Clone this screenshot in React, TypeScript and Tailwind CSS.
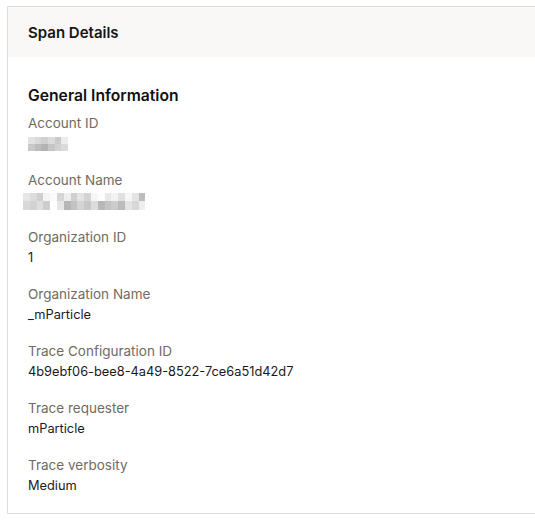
const fields: { label: string; value?: string; redacted?: "id" | "name" }[] = [
  { label: "Account ID", redacted: "id" },
  { label: "Account Name", redacted: "name" },
  { label: "Organization ID", value: "1" },
  { label: "Organization Name", value: "_mParticle" },
  { label: "Trace Configuration ID", value: "4b9ebf06-bee8-4a49-8522-7ce6a51d42d7" },
  { label: "Trace requester", value: "mParticle" },
  { label: "Trace verbosity", value: "Medium" },
];

// pixelated blur blocks standing in for redacted values
const idCells = [
  ["bg-[#e2e2e2]", "bg-[#dadada]", "bg-[#d0d0d0]", "bg-[#dcdcdc]", "bg-[#cacaca]", "bg-[#ececec]"],
  ["bg-[#c9c9c9]", "bg-[#bdbdbd]", "bg-[#b2b2b2]", "bg-[#c6c6c6]", "bg-[#d2d2d2]", "bg-[#dadada]"],
];

const nameCells = [
  [
    "bg-[#e6e6e6]", "bg-[#dcdcdc]", "bg-[#cfcfcf]", "bg-[#f4f4f4]", "bg-[#fbfbfb]", "bg-[#d6d6d6]",
    "bg-[#eeeeee]", "bg-[#cfcfcf]", "bg-[#e4e4e4]", "bg-[#d4d4d4]", "bg-[#f6f6f6]", "bg-[#fdfdfd]",
    "bg-[#e8e8e8]", "bg-[#f2f2f2]", "bg-[#e0e0e0]", "bg-[#f6f6f6]", "bg-[#e4e4e4]", "bg-[#bdbdbd]",
  ],
  [
    "bg-[#d8d8d8]", "bg-[#d2d2d2]", "bg-[#dedede]", "bg-[#cdcdcd]", "bg-[#ffffff]", "bg-[#e6e6e6]",
    "bg-[#b6b6b6]", "bg-[#c2c2c2]", "bg-[#d4d4d4]", "bg-[#c8c8c8]", "bg-[#dcdcdc]", "bg-[#b8b8b8]",
    "bg-[#c4c4c4]", "bg-[#cccccc]", "bg-[#bcbcbc]", "bg-[#e4e4e4]", "bg-[#d8d8d8]", "bg-[#eeeeee]",
  ],
];

function Blur({ kind }: { kind: "id" | "name" }) {
  const rows = kind === "id" ? idCells : nameCells;
  return (
    <div className={kind === "id" ? "flex h-[22px] flex-col justify-center" : "-ml-[5px] flex h-[22px] flex-col justify-center"}>
      {rows.map((row, i) => (
        <div key={i} className="flex">
          {row.map((c, j) => (
            <div
              key={j}
              className={`${c} ${kind === "id" ? "h-[7px] w-[6.7px]" : "h-[8.5px] w-[6.8px]"}`}
            />
          ))}
        </div>
      ))}
    </div>
  );
}

export default function App() {
  return (
    <div className="min-h-[526px] bg-white pl-[7px] pt-[6px] font-['Inter',sans-serif]">
      <div className="w-[532px] border border-[#dedcd8] bg-white">
        <div className="flex h-[50px] items-center bg-[#f9f8f6] px-5 pt-[2px]">
          <h2 className="text-[15px] font-semibold text-[#161616]">Span Details</h2>
        </div>

        <div className="px-5 pt-[27px] pb-[16px]">
          <h3 className="mb-[5px] text-[15.7px] leading-6 font-semibold text-[#111]">General Information</h3>
          <div className="flex flex-col gap-[15px]">
            {fields.map((f) => (
              <div key={f.label}>
                <div className="text-[13.5px] leading-5 text-[#6f6b63]">{f.label}</div>
                {f.redacted ? (
                  <Blur kind={f.redacted} />
                ) : (
                  <div className="text-[12.8px] leading-[22px] text-[#1a1a1a]">{f.value}</div>
                )}
              </div>
            ))}
          </div>
        </div>
      </div>
    </div>
  );
}
